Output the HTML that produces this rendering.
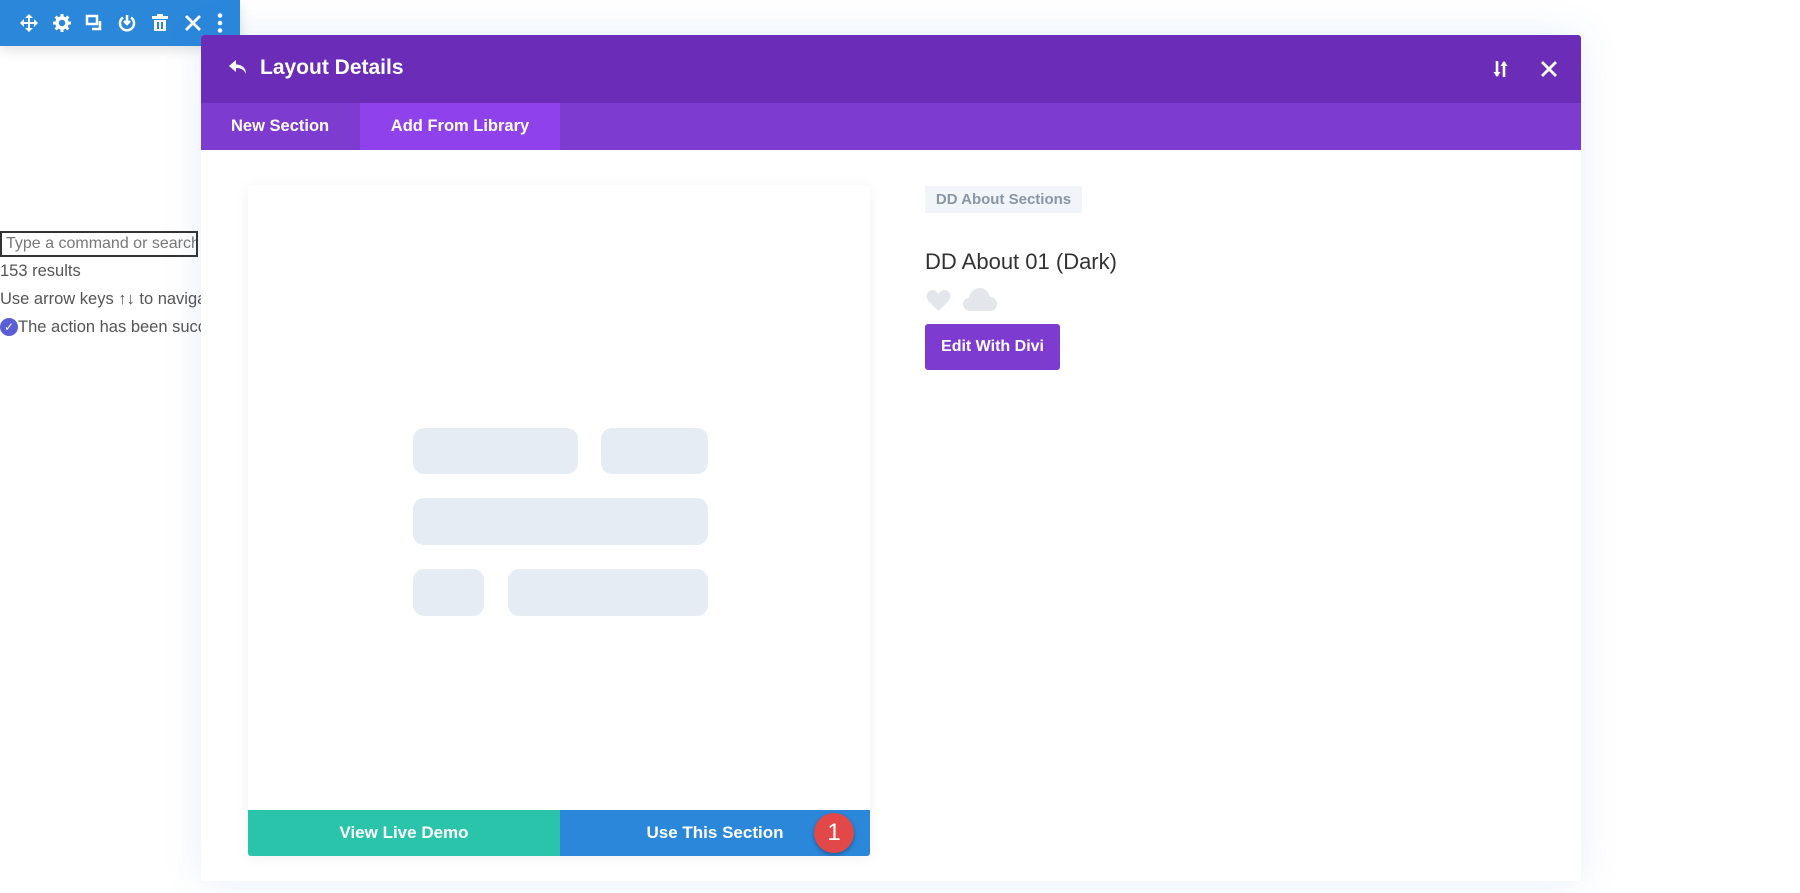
<!DOCTYPE html>
<html><head><meta charset="utf-8"><style>
*{box-sizing:border-box;margin:0;padding:0}
body{width:1800px;height:893px;background:#fff;font-family:"Liberation Sans",sans-serif;position:relative;overflow:hidden}
.tb{position:absolute;left:0;top:0;width:240px;height:46px;background:#2b87da;border-radius:0 0 5px 0;box-shadow:0 4px 12px rgba(0,0,0,.12)}
.tb svg{position:absolute;top:13px}
.left{position:absolute;left:0;color:#555;font-size:16.5px;white-space:nowrap}
.modal{position:absolute;left:201px;top:35px;width:1380px;height:846px;background:#fff;box-shadow:0 0 40px rgba(43,135,218,.12);border-radius:3px;overflow:hidden}
.hd{height:68px;background:#6b2cb7;position:relative;color:#fff}
.hd .t{position:absolute;left:59px;top:21px;font-size:21px;font-weight:bold}
.tabs{height:47px;background:#7e3bd0;position:relative;color:#fff;font-weight:bold;font-size:16.5px}
.tab{position:absolute;top:0;height:47px;line-height:47px}
.card{position:absolute;left:47px;top:150px;width:622px;height:671px;background:#fff;box-shadow:0 2px 14px rgba(0,0,0,.06);border-radius:3px;overflow:hidden}
.sk{position:absolute;background:#e6ecf4;border-radius:11px}
.btn{position:absolute;top:625px;height:46px;line-height:46px;color:#fff;font-weight:bold;font-size:17px;text-align:center}
.r{position:absolute}
</style></head><body>
<div class="tb">
<svg style="left:19px" width="20" height="20" viewBox="0 0 20 20" fill="#fff"><path d="M10 1l4 4h-3v4h4V6l4 4-4 4v-3h-4v4h3l-4 4-4-4h3v-4H5v3l-4-4 4-4v3h4V5H6z"/></svg>
<svg style="left:52px" width="20" height="20" viewBox="0 0 20 20"><circle cx="10" cy="10" r="5" fill="none" stroke="#fff" stroke-width="3.5"/><g stroke="#fff" stroke-width="3"><path d="M10 1v4M10 15v4M1 10h4M15 10h4M3.6 3.6l2.8 2.8M13.6 13.6l2.8 2.8M3.6 16.4l2.8-2.8M13.6 6.4l2.8-2.8"/></g></svg>
<svg style="left:85px" width="20" height="20" viewBox="0 0 20 20" fill="none" stroke="#fff" stroke-width="2.5"><rect x="2" y="3" width="10" height="8"/><path d="M15 8v8H7"/></svg>
<svg style="left:117px" width="20" height="20" viewBox="0 0 20 20" fill="none" stroke="#fff" stroke-width="2.5"><path d="M6 4.5A7 7 0 1 0 14 4.5"/><path d="M10 2v9M7 8l3 3 3-3"/></svg>
<svg style="left:150px" width="20" height="20" viewBox="0 0 20 20" fill="#fff"><rect x="2" y="3" width="16" height="3"/><rect x="7" y="1" width="6" height="2"/><path d="M4 7h12v11H4zM7 9v7h2V9zm4 0v7h2V9z" fill-rule="evenodd"/></svg>
<svg style="left:183px" width="20" height="20" viewBox="0 0 20 20" stroke="#fff" stroke-width="2.8"><path d="M3 3l14 14M17 3L3 17"/></svg>
<svg style="left:210px" width="20" height="20" viewBox="0 0 20 20" fill="#fff"><circle cx="10" cy="2.5" r="2.3"/><circle cx="10" cy="10" r="2.3"/><circle cx="10" cy="17.5" r="2.3"/></svg>
</div>
<div style="position:absolute;left:0;top:231px;width:198px;height:26px;border:2px solid #333;font-size:16px;color:#777;padding:2px 4px;overflow:hidden;white-space:nowrap">Type a command or search</div>
<div class="left" style="top:262px">153 results</div>
<div class="left" style="top:290px">Use arrow keys ↑↓ to navigate</div>
<div class="left" style="top:318px"><span style="display:inline-block;width:18px;height:18px;border-radius:50%;background:#5b5fd6;color:#fff;font-size:12px;text-align:center;line-height:18px;vertical-align:1px">✓</span>The action has been successful</div>
<div class="modal">
<div class="hd">
<svg style="position:absolute;left:27px;top:24px" width="20" height="18" viewBox="0 0 20 18" fill="#fff"><path d="M8 1L1 7l7 6V9c5 0 8 1.5 10 6 0-6-4-9.5-10-9.5z"/></svg>
<div class="t">Layout Details</div>
<svg style="position:absolute;left:1291px;top:24px" width="18" height="20" viewBox="0 0 18 20" stroke="#fff" stroke-width="2.6" fill="#fff"><path d="M5 2v15M12 18V3"/><path d="M1.5 13l3.5 5 3.5-5zM8.5 7l3.5-5 3.5 5z" stroke="none"/></svg>
<svg style="position:absolute;left:1339px;top:25px" width="18" height="18" viewBox="0 0 18 18" stroke="#fff" stroke-width="2.8"><path d="M2 2l14 14M16 2L2 16"/></svg>
</div>
<div class="tabs">
<div class="tab" style="left:30px">New Section</div>
<div class="tab" style="left:159px;width:200px;background:#8f42ec;text-align:center">Add From Library</div>
</div>
<div class="card">
<div class="sk" style="left:165px;top:243px;width:165px;height:46px"></div>
<div class="sk" style="left:353px;top:243px;width:107px;height:46px"></div>
<div class="sk" style="left:165px;top:313px;width:295px;height:47px"></div>
<div class="sk" style="left:165px;top:384px;width:71px;height:47px"></div>
<div class="sk" style="left:260px;top:384px;width:200px;height:47px"></div>
<div class="btn" style="left:0;width:312px;background:#29c4a9">View Live Demo</div>
<div class="btn" style="left:312px;width:310px;background:#2b87da">Use This Section</div>
<div style="position:absolute;left:566px;top:628px;width:40px;height:40px;border-radius:50%;background:#e24848;color:#fff;font-size:24px;text-align:center;line-height:40px;box-shadow:0 2px 4px rgba(0,0,0,.3)">1</div>
</div>
<div class="r" style="left:724px;top:151px;width:157px;height:27px;background:#f1f4f8;color:#8a96a3;font-size:15px;font-weight:bold;line-height:27px;text-align:center;border-radius:2px">DD About Sections</div>
<div class="r" style="left:724px;top:214px;font-size:22px;color:#333">DD About 01 (Dark)</div>
<svg class="r" style="left:725px;top:254px" width="25" height="22" viewBox="0 0 24 21" fill="#e3e6ea"><path d="M12 21L2 11C-1 7 1 1 6 1c3 0 5 2 6 4 1-2 3-4 6-4 5 0 7 6 4 10z"/></svg>
<svg class="r" style="left:762px;top:252px" width="34" height="24" viewBox="0 0 34 24" fill="#e3e6ea"><path d="M8 24C3 24 0 21 0 17s3-6 6-6c1-6 5-10 11-10 5 0 9 4 10 9 4 0 7 3 7 7s-3 7-7 7z"/></svg>
<div class="r" style="left:724px;top:289px;width:135px;height:46px;background:#7e3bd0;color:#fff;font-weight:bold;font-size:16px;line-height:46px;text-align:center;border-radius:3px">Edit With Divi</div>
</div>
</body></html>
